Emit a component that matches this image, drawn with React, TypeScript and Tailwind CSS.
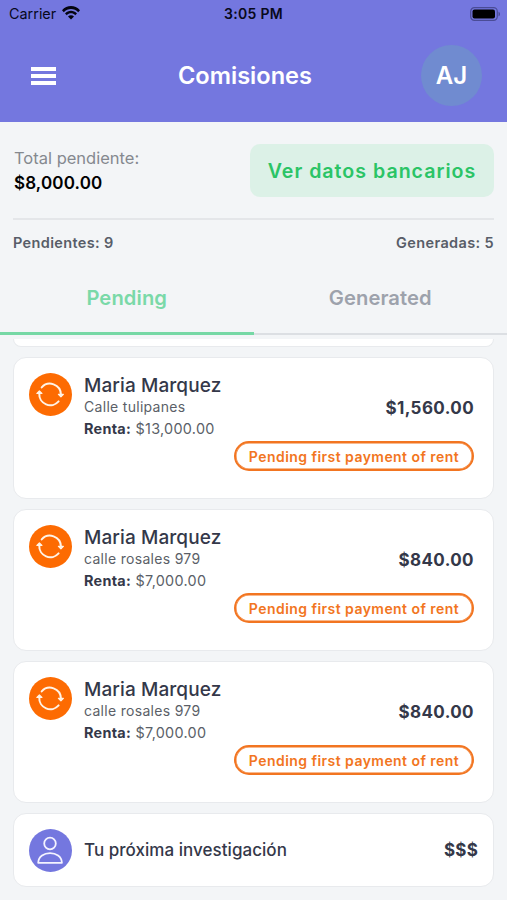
import React from 'react';

interface Commission {
  id: number;
  name: string;
  address: string;
  rent: string;
  amount: string;
}

const commissions: Commission[] = [
  { id: 1, name: 'Maria Marquez', address: 'Calle tulipanes', rent: '$13,000.00', amount: '$1,560.00' },
  { id: 2, name: 'Maria Marquez', address: 'calle rosales 979', rent: '$7,000.00', amount: '$840.00' },
  { id: 3, name: 'Maria Marquez', address: 'calle rosales 979', rent: '$7,000.00', amount: '$840.00' },
];

const WifiIcon = () => (
  <svg width="18" height="14" viewBox="0 0 18 14" fill="#050510">
    <path d="M0 4.3C5-1.3 13-1.3 18 4.3L16.2 6.2C12.2 1.8 5.8 1.8 1.8 6.2Z" />
    <path d="M3 7.4C6.3 3.8 11.7 3.8 15 7.4L13.2 9.2C10.8 6.7 7.2 6.7 4.8 9.2Z" />
    <path d="M6 10.4C7.7 8.7 10.3 8.7 12 10.4L9 13.5Z" />
  </svg>
);

const BatteryIcon = () => (
  <svg width="31" height="14" viewBox="0 0 31 14">
    <rect x="0.7" y="0.7" width="26.6" height="12.6" rx="3.7" fill="none" stroke="#4a4c96" strokeWidth="1.2" />
    <rect x="2.5" y="2.5" width="22.5" height="9" rx="2" fill="#000" />
    <path d="M28.5 4.7C30.5 5.3 30.5 8.7 28.5 9.3Z" fill="#4a4c96" />
  </svg>
);

const SyncIcon = () => (
  <svg className="size-[43px] shrink-0" viewBox="0 0 43 43">
    <circle cx="21.5" cy="21.5" r="21.5" fill="#fd6b02" />
    <g fill="none" stroke="#fff3e6" strokeWidth="2" strokeLinecap="round">
      <path d="M12.7 14.4A11 11 0 0 1 31.9 21.3" />
      <path d="M29.6 28.4A11 11 0 0 1 10.3 20.5" />
    </g>
    <g fill="#fff3e6" stroke="#fff3e6" strokeWidth="1.2" strokeLinejoin="round">
      <path d="M29.4 21.3H34.4L31.9 23.8Z" />
      <path d="M7.9 20.5H12.9L10.4 18Z" />
    </g>
  </svg>
);

const PersonIcon = () => (
  <svg className="size-[43px] shrink-0" viewBox="0 0 43 43">
    <circle cx="21.5" cy="21.5" r="21.5" fill="#7477df" />
    <g fill="none" stroke="#f4f3ff" strokeWidth="1.8" strokeLinejoin="round">
      <circle cx="21" cy="14.5" r="5.8" />
      <path d="M9.2 33.8C9.7 21 32.4 21 32.9 33.8Z" />
    </g>
  </svg>
);

const CommissionCard: React.FC<{ item: Commission }> = ({ item }) => (
  <div className="flex h-[142px] shrink-0 rounded-[13px] border border-[#e8eaed] bg-white pl-[15px] pt-[15px] pr-[19px]">
    <SyncIcon />
    <div className="ml-3 min-w-0 flex-1">
      <div className="h-6 pt-px text-[19px] leading-6 font-medium tracking-[0.1px] text-[#343849]">{item.name}</div>
      <div className="flex h-[44px] justify-between">
        <div className="text-[14px] leading-[22px] tracking-[0.3px] text-[#5b5f68]">
          <div className="-mt-px">{item.address}</div>
          <div className="text-[14.4px]">
            <b className="font-bold text-[#343849]">Renta:</b> {item.rent}
          </div>
        </div>
        <div className="-mt-px text-[17px] leading-6 font-bold tracking-[0.4px] text-[#343849]">{item.amount}</div>
      </div>
      <div className="flex justify-end">
        <span className="flex h-[30px] w-[240px] items-center justify-center rounded-full border-2 border-[#f27521] text-[14px] font-semibold tracking-[0.45px] text-[#f27521] shadow-[inset_0_0_0_0.5px_#f27521]">
          Pending first payment of rent
        </span>
      </div>
    </div>
  </div>
);

export default function App() {
  return (
    <div className="flex h-[900px] w-[507px] flex-col overflow-hidden bg-[#f3f5f7] font-['Inter',sans-serif] whitespace-nowrap">
      <header className="h-[122px] shrink-0 bg-[#7477df] text-white">
        <div className="grid h-[27px] grid-cols-[1fr_auto_1fr] items-center pl-[9px] pr-[6px] text-[#08091c]">
          <div className="flex items-center gap-[6px] text-[14.4px]">
            Carrier <WifiIcon />
          </div>
          <span className="-ml-[3px] text-[14px] font-semibold tracking-[0.3px]">3:05 PM</span>
          <div className="flex justify-end">
            <BatteryIcon />
          </div>
        </div>
        <div className="flex h-[97px] items-center justify-between pl-[31px] pr-[25px]">
          <div className="flex w-[61px] flex-col gap-[3px]">
            <span className="h-1 w-[25px] bg-white" />
            <span className="h-1 w-[25px] bg-white" />
            <span className="h-1 w-[25px] bg-white" />
          </div>
          <h1 className="-ml-[23px] text-[23.6px] font-semibold">Comisiones</h1>
          <div className="flex size-[61px] items-center justify-center rounded-full bg-[#708bd0] text-[24px] font-semibold">
            AJ
          </div>
        </div>
      </header>

      <section className="mx-[13px] h-[98px] shrink-0 border-b-2 border-[#e4e6e9]">
        <div className="flex justify-between pt-[22px]">
          <div className="pt-[2px] pl-px text-[16.5px] leading-6">
            <div className="text-[#85898f]">Total pendiente:</div>
            <div className="pt-px text-[17px] font-semibold tracking-[0.15px] text-black">$8,000.00</div>
          </div>
          <button className="h-[53px] w-[244px] rounded-[10px] bg-[#dcf1e7] pt-[2px] text-[19.6px] font-semibold tracking-[1px] text-[#2bc466]">
            Ver datos bancarios
          </button>
        </div>
      </section>
      <div className="flex h-[45px] shrink-0 items-center justify-between px-[13px] text-[14.5px] font-semibold tracking-[0.36px] text-[#585d68]">
        <span>Pendientes: 9</span>
        <span>Generadas: 5</span>
      </div>

      <nav className="grid h-[70px] shrink-0 grid-cols-2 text-[20.2px] font-semibold tracking-[0.1px]">
        <button className="border-b-[3px] border-[#76d8a5] pt-px pb-px text-[#7ad9a8]">Pending</button>
        <button className="border-b-2 border-[#dcdfe3] pb-px text-[#9da2ac]">Generated</button>
      </nav>

      <main className="flex min-h-0 flex-1 flex-col gap-[10px] px-[13px] pt-1">
        <div className="h-[8px] shrink-0 rounded-b-[13px] border border-t-0 border-[#e8eaed] bg-white" />
        {commissions.map((item) => (
          <CommissionCard key={item.id} item={item} />
        ))}
        <div className="flex h-[74px] shrink-0 items-center rounded-[13px] border border-[#e8eaed] bg-white px-[15px] text-[#343849]">
          <PersonIcon />
          <span className="ml-3 flex-1 pt-[2px] text-[17px] font-medium tracking-[0.04px]">Tu próxima investigación</span>
          <span className="pt-[2px] text-[17px] font-bold tracking-[0.2px]">$$$</span>
        </div>
      </main>
    </div>
  );
}
